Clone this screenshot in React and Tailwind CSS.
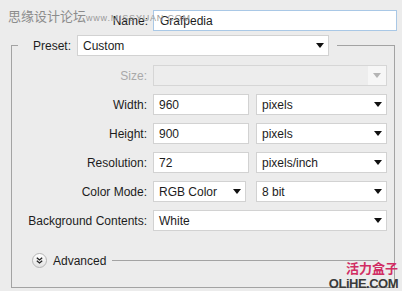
import React from 'react';

const Arrow = ({ disabled }) => (
  <svg width="8" height="5" viewBox="0 0 8 5" className="shrink-0">
    <path d="M0 0 H8 L4 5 Z" fill={disabled ? '#b4b4b4' : '#111'} />
  </svg>
);

const Select = ({ value, className = '', disabled }) => (
  <div
    className={`h-[21px] flex items-center justify-between border pl-[5px] pr-[4px] ${
      disabled ? 'border-[#d6d6d6] bg-[#ededed]' : 'border-[#d2d2d2] bg-white'
    } ${className}`}
  >
    <span>{value}</span>
    <Arrow disabled={disabled} />
  </div>
);

const Input = ({ value, className = '' }) => (
  <div className={`h-[21px] flex items-center border border-[#d2d2d2] bg-white pl-[5px] ${className}`}>
    {value}
  </div>
);

const Row = ({ label, muted, children }) => (
  <div className="flex items-center h-[21px]">
    <span className={`w-[135px] text-right ${muted ? 'text-[#a9a9a9]' : ''}`}>{label}</span>
    <div className="ml-[6px] flex gap-[7px]">{children}</div>
  </div>
);

export default function App() {
  return (
    <div
      className="relative w-[402px] h-[291px] overflow-hidden bg-[#ececec] text-[12px] leading-none text-[#1c1c1c]"
      style={{ fontFamily: '"Liberation Sans", Arial, sans-serif' }}
    >
      {/* top-left watermark */}
      <div className="absolute left-[8px] top-[9px] text-[13px] leading-none text-[#8c8c8c]" style={{ fontFamily: '"Noto Sans CJK SC", sans-serif' }}>
        思缘设计论坛
      </div>
      <div className="absolute left-[86px] top-[14px] text-[9px] leading-none text-[#9a9a9a] tracking-[0.8px]">
        www.MISSYUAN.COM
      </div>

      <div className="flex items-center h-[21px] mt-[10px]">
        <span className="w-[148px] text-right">Name:</span>
        <div className="ml-[5px] h-[21px] w-[244px] flex items-center border border-[#a9c8e6] bg-white pl-[6px]">
          Grafpedia
        </div>
      </div>

      <fieldset className="ml-[11px] mt-[4px] w-[384px] border border-[#a3a3a3] pb-[19px]">
        <legend className="ml-[6px] pl-[15px] pr-[8px]">
          <div className="flex items-center h-[21px]">
            <span>Preset:</span>
            <Select value="Custom" className="ml-[6px] w-[252px]" />
          </div>
        </legend>

        <div className="mt-[9px] flex flex-col gap-[8px]">
          <Row label="Size:" muted>
            <div className="h-[21px] w-[234px] flex border border-[#d6d6d6] bg-[#ededed]">
              <div className="flex-1" />
              <div className="w-[18px] flex items-center justify-center bg-[#f6f6f6]">
                <Arrow disabled />
              </div>
            </div>
          </Row>
          <Row label="Width:">
            <Input value="960" className="w-[96px]" />
            <Select value="pixels" className="w-[131px]" />
          </Row>
          <Row label="Height:">
            <Input value="900" className="w-[96px]" />
            <Select value="pixels" className="w-[131px]" />
          </Row>
          <Row label="Resolution:">
            <Input value="72" className="w-[96px]" />
            <Select value="pixels/inch" className="w-[131px]" />
          </Row>
          <Row label="Color Mode:">
            <Select value="RGB Color" className="w-[93px]" />
            <Select value="8 bit" className="w-[131px] ml-[3px]" />
          </Row>
          <Row label="Background Contents:">
            <Select value="White" className="w-[234px]" />
          </Row>
        </div>

        <div className="mt-[22px] ml-[20px] mr-[16px] flex items-center h-[15px]">
          <div className="w-[15px] h-[15px] rounded-full border border-[#b5b5b5] bg-gradient-to-b from-white to-[#e2e2e2] flex items-center justify-center">
            <svg width="7" height="7" viewBox="0 0 7 7">
              <path d="M0.8 0.8 L3.5 3 L6.2 0.8 M0.8 3.8 L3.5 6 L6.2 3.8" fill="none" stroke="#222" strokeWidth="1.3" />
            </svg>
          </div>
          <span className="ml-[6px]">Advanced</span>
          <div className="ml-[6px] flex-1 h-px bg-[#a3a3a3]" />
        </div>
      </fieldset>

      {/* bottom-right watermark */}
      <div className="absolute right-[4px] top-[261px] text-[13px] font-bold text-[#d12d63] leading-none" style={{ fontFamily: '"Noto Sans CJK SC", sans-serif' }}>
        活力盒子
      </div>
      <div className="absolute right-[4px] top-[277px] text-[13px] font-bold text-[#3a3a3a] leading-none tracking-[-0.5px]">
        OLiHE.COM
      </div>
    </div>
  );
}
